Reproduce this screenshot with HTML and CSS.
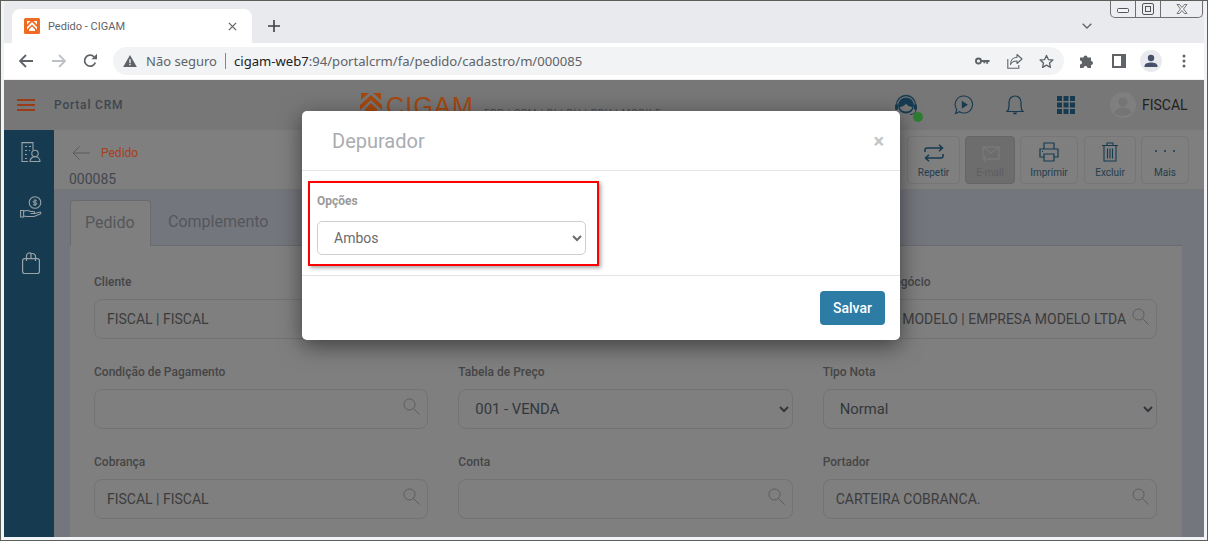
FILE: index.html
```html
<!DOCTYPE html>
<html lang="pt-BR">
<head>
<meta charset="utf-8">
<title>Pedido - CIGAM</title>
<link rel="stylesheet" href="styles.css">
</head>
<body>
<div class="window">
  <div class="tabstrip">
    <div class="tab">
      <svg class="favicon" viewBox="0 0 16 16"><rect width="16" height="16" rx="1.5" fill="#f26a21"/><path d="M3 3h3.500L3 6.500zM13 3H9.500L13 6.500zM8 4l5 5v2.500L8 6.500 3 11.500V9zM8 8.500l3 3V13H5v-1.500z" fill="#fff"/></svg>
      <span class="tab-title">Pedido - CIGAM</span>
      <svg class="tab-close" viewBox="0 0 10 10"><path d="M1 1l8 8M9 1l-8 8" stroke="#5f6368" stroke-width="1.4"/></svg>
    </div>
    <svg class="new-tab" viewBox="0 0 12 12"><path d="M6 0v12M0 6h12" stroke="#3c4043" stroke-width="1.6"/></svg>
    <svg class="tab-search" viewBox="0 0 10 6"><path d="M.7.7L5 5 9.300.7" fill="none" stroke="#5f6368" stroke-width="1.300"/></svg>
    <div class="win-controls">
      <span class="win-btn win-min"><svg viewBox="0 0 12 5" width="12" height="5"><rect x=".5" y=".5" width="11" height="4" rx="1" fill="#f4f5f7" stroke="#555"/></svg></span>
      <span class="win-btn win-max"><svg viewBox="0 0 12 12" width="12" height="12"><rect x=".5" y=".5" width="11" height="11" rx="1.500" fill="none" stroke="#555"/><rect x="3.500" y="3.500" width="5" height="5" fill="none" stroke="#555"/></svg></span>
      <span class="win-btn win-close"><svg viewBox="0 0 12 10" width="12" height="10"><path d="M1 .5h2.500L6 3.500 8.500.5H11L7.500 5 11 9.500H8.500L6 6.500 3.500 9.500H1L4.500 5z" fill="#f4f5f7" stroke="#555" stroke-width=".8"/></svg></span>
    </div>
  </div>

  <div class="toolbar">
    <svg class="tb-ico" viewBox="0 0 16 16"><path d="M15 8H2M8 2L2 8l6 6" fill="none" stroke="#5f6368" stroke-width="1.800"/></svg>
    <svg class="tb-ico" viewBox="0 0 16 16"><path d="M1 8h13M8 2l6 6-6 6" fill="none" stroke="#bdc1c6" stroke-width="1.800"/></svg>
    <svg class="tb-ico" viewBox="0 0 16 16"><path d="M13.300 9.500A5.500 5.500 0 1 1 12 3.800" fill="none" stroke="#5f6368" stroke-width="1.800"/><path d="M9.500 6.300H15V.8z" fill="#5f6368"/></svg>
    <div class="omnibox">
      <svg class="warn" viewBox="0 0 16 14"><path d="M8 0l8 14H0z" fill="#5f6368"/><path d="M7.200 5h1.600v4.500H7.200zM7.200 10.500h1.600V12H7.200z" fill="#f1f3f4"/></svg>
      <span class="not-secure">Não seguro</span>
      <span class="omni-sep"></span>
      <span class="url"><b>cigam-web7</b>:94/portalcrm/fa/pedido/cadastro/m/000085</span>
      <svg class="omni-ico key" viewBox="0 0 16 8"><circle cx="3.700" cy="4" r="2.700" fill="none" stroke="#5f6368" stroke-width="2"/><path d="M6 3h9.500v2H14v2h-2V5h-1v1.500H9V5H6z" fill="#5f6368"/></svg>
      <svg class="omni-ico share" viewBox="0 0 16 16"><path d="M10 1.500l5 4.500-5 4.500V8C6.500 8 4.500 9 3.500 11.500 3.500 7.500 6 4.500 10 4.300z" fill="none" stroke="#5f6368" stroke-width="1.100" stroke-linejoin="round"/><path d="M.8 6v9.200h11V12" fill="none" stroke="#5f6368" stroke-width="1.100"/></svg>
      <svg class="omni-ico star" viewBox="0 0 16 16"><path d="M8 1.500l2 4.400 4.800.5-3.600 3.200 1 4.700L8 11.900l-4.200 2.400 1-4.700L1.200 6.400 6 5.900z" fill="none" stroke="#5f6368" stroke-width="1.400" stroke-linejoin="round"/></svg>
    </div>
    <svg class="tb-ico puzzle" viewBox="0 0 16 16"><path d="M1 4.500h3.500a2 2 0 1 1 4 0H12V8a2 2 0 1 1 0 4v3H8.500a2 2 0 1 0-4 0H1v-3.500a2 2 0 1 0 0-4z" fill="#5f6368"/></svg>
    <svg class="tb-ico panel" viewBox="0 0 14 14"><path d="M0 0h14v14H0z" fill="#5f6368"/><path d="M2 2h7v10H2z" fill="#fff"/></svg>
    <svg class="profile" viewBox="0 0 22 22"><circle cx="11" cy="11" r="11" fill="#e8eaed"/><circle cx="11" cy="8" r="3.200" fill="#46506b"/><path d="M4.500 16c0-2.500 3.500-3.500 6.500-3.500s6.500 1 6.500 3.500v1h-13z" fill="#46506b"/></svg>
    <svg class="tb-ico dots" viewBox="0 0 4 14"><circle cx="2" cy="2" r="1.500" fill="#5f6368"/><circle cx="2" cy="7" r="1.500" fill="#5f6368"/><circle cx="2" cy="12" r="1.500" fill="#5f6368"/></svg>
  </div>

  <div class="page">
    <header class="app-header">
      <div class="hamburger"><i></i><i></i><i></i></div>
      <span class="app-name">Portal CRM</span>
      <div class="logo">
        <svg class="logo-mark" viewBox="0 0 22 20"><path d="M1 0h8L1 7zM21 0h-8l8 7zM11 2l11 10v5L11 7 0 17v-5zM11 10l6 6v4H5v-4z" fill="#a5480f"/></svg>
        <span class="logo-name">CIGAM</span>
        <span class="logo-sub">ERP | CRM | BI | RH | PDV | MOBILE</span>
      </div>
      <div class="header-icons">
        <span class="agent">
          <svg viewBox="0 0 24 26" width="24" height="26"><path d="M2.500 13a9.500 9.500 0 0 1 19 0" fill="none" stroke="#163b50" stroke-width="1.300"/><circle cx="12" cy="13.500" r="8" fill="#163b50"/><path d="M5.500 15c3 0 5-1.500 6.500-3.500 1.500 2 3.500 3.500 6.500 3.500-1 3-3.500 4.500-6.500 4.500S6.500 18 5.500 15z" fill="#777"/><rect x="1" y="12" width="3" height="6" rx="1.500" fill="#163b50"/><rect x="20" y="12" width="3" height="6" rx="1.500" fill="#163b50"/><path d="M22 18c0 3-3 4.500-6 4.500" fill="none" stroke="#163b50"/></svg>
          <i class="status-dot"></i>
        </span>
        <svg class="play" viewBox="0 0 20 20" width="20" height="20"><path d="M10 1a8.500 8.500 0 1 1-4.500 15.700L1.500 18.500l1.300-4A8.500 8.500 0 0 1 10 1z" fill="none" stroke="#163b50" stroke-width="1.100"/><path d="M7.800 5.800l6 4-6 4z" fill="#163b50"/></svg>
        <svg class="bell" viewBox="0 0 18 22" width="18" height="22"><path d="M1 17.500h16c-2-1.500-2-3-2-5.500V8A6 6 0 0 0 3 8v4c0 2.500 0 4-2 5.500z" fill="none" stroke="#163b50" stroke-width="1.200"/><path d="M7 18.500a2 2 0 0 0 4 0z" fill="#163b50"/></svg>
        <svg class="grid-ico" viewBox="0 0 18 18" width="18" height="18"><path d="M0 0h5v5H0zM6.500 0h5v5h-5zM13 0h5v5h-5zM0 6.500h5v5H0zM6.500 6.500h5v5h-5zM13 6.500h5v5h-5zM0 13h5v5H0zM6.500 13h5v5h-5zM13 13h5v5h-5z" fill="#163b50"/></svg>
        <svg class="avatar" viewBox="0 0 26 26" width="26" height="26"><circle cx="13" cy="13" r="13" fill="#7f7f7f"/><circle cx="13" cy="10" r="4.500" fill="#757575"/><path d="M4.500 21c1-4 5-5.500 8.500-5.500s7.500 1.500 8.500 5.500a13 13 0 0 1-17 0z" fill="#757575"/></svg>
        <span class="user-name">FISCAL</span>
      </div>
    </header>

    <div class="app-body">
      <nav class="sidebar">
        <svg viewBox="0 0 20 20" width="20" height="20"><path d="M7 19.500H1V.6h11V8M4 4.500h2M8 4.500h2M4 8.500h2M8 8.500h1M4 12.500h2M4 16.500h2" fill="none" stroke="#98a2a8" stroke-width="1.100"/><circle cx="14" cy="11.500" r="3.200" fill="none" stroke="#98a2a8" stroke-width="1.100"/><path d="M9 19.500c0-3 2.500-4.800 5-4.800s5 1.800 5 4.800z" fill="none" stroke="#98a2a8" stroke-width="1.100"/></svg>
        <svg viewBox="0 0 22 22" width="22" height="22"><circle cx="15" cy="6.500" r="5.800" fill="none" stroke="#98a2a8" stroke-width="1.100"/><path d="M15 3v7M17 4.800h-2.800a1 1 0 0 0 0 2h1.600a1 1 0 0 1 0 2H13" fill="none" stroke="#98a2a8" stroke-width="1"/><path d="M.6 14.500h3v6.500h-3zM3.600 15.500c3-2 5-1 7 0h3c1.300 0 1.300 2 0 2h-3 4.400l4.500-1.300c1.400-.3 1.800 1 .7 1.700L14 20.500H7l-3.400-.5" fill="none" stroke="#98a2a8" stroke-width="1.100"/></svg>
        <svg class="bag" viewBox="0 0 18 22" width="18" height="22"><rect x=".6" y="6.600" width="16.800" height="15" rx="2" fill="none" stroke="#98a2a8" stroke-width="1.200"/><path d="M4.500 9V4a3 3 0 0 1 5-2.300A3 3 0 0 1 13.500 4v5M9 2v4" fill="none" stroke="#98a2a8" stroke-width="1.200"/></svg>
      </nav>

      <main class="main">
        <div class="action-bar">
          <div class="crumbs">
            <div class="crumb-top">
              <svg viewBox="0 0 18 14" width="18" height="14"><path d="M18 7H1M7.500 .5L1 7l6.500 6.500" fill="none" stroke="#5c5c5c" stroke-width="1"/></svg>
              <span class="crumb-link">Pedido</span>
            </div>
            <div class="crumb-code">000085</div>
          </div>
          <div class="actions">
            <div class="action a-repeat">
              <svg viewBox="0 0 20 18" width="20" height="18"><path d="M1 8V6a2 2 0 0 1 2-2h15M15 .8L18.500 4 15 7.200M19 10v2a2 2 0 0 1-2 2H2M5 10.800L1.500 14 5 17.200" fill="none" stroke="#163b50" stroke-width="1.500"/></svg>
              <span>Repetir</span>
            </div>
            <div class="action a-mail is-disabled">
              <svg viewBox="0 0 20 16" width="20" height="16"><path d="M3 9V1h16v12H7M3 1l8 6 8-6M2 11h4M3 13h3M4 15h2" fill="none" stroke="#7e7e7e" stroke-width="1"/></svg>
              <span>E-mail</span>
            </div>
            <div class="action a-print">
              <svg viewBox="0 0 20 20" width="20" height="20"><path d="M5 7V1h10v6M5 15H1V7h18v8h-4M5 12h10v7H5zM3 9.500h1" fill="none" stroke="#163b50" stroke-width="1.200"/></svg>
              <span>Imprimir</span>
            </div>
            <div class="action a-trash">
              <svg viewBox="0 0 16 20" width="16" height="20"><path d="M0 3.500h16M5 3.500V1h6v2.500M2 3.500V19h12V3.500M5.500 6.500v10M8 6.500v10M10.500 6.500v10" fill="none" stroke="#163b50" stroke-width="1.100"/></svg>
              <span>Excluir</span>
            </div>
            <div class="action a-more">
              <svg viewBox="0 0 22 4" width="22" height="4"><circle cx="2" cy="2" r="1" fill="#163b50"/><circle cx="11" cy="2" r="1" fill="#163b50"/><circle cx="20" cy="2" r="1" fill="#163b50"/></svg>
              <span>Mais</span>
            </div>
          </div>
        </div>

        <div class="content">
          <div class="tabs">
            <span class="page-tab is-active">Pedido</span>
            <span class="page-tab">Complemento</span>
          </div>
          <div class="card">
            <div class="form-grid">
              <div class="field"><label>Cliente</label><div class="search-input"><input value="FISCAL | FISCAL"><svg class="lens" viewBox="0 0 17 17"><circle cx="6.500" cy="6.500" r="5.500" fill="none" stroke="#5c5c5c"/><path d="M10.500 10.500L16.500 16.500" stroke="#5c5c5c"/></svg></div></div>
              <div class="field"><label>Vendedor</label><div class="search-input"><input value=""></div></div>
              <div class="field"><label>Unidade de Negócio</label><div class="search-input"><input class="txt-tight" value="EMPRESA MODELO | EMPRESA MODELO LTDA"><svg class="lens" viewBox="0 0 17 17"><circle cx="6.500" cy="6.500" r="5.500" fill="none" stroke="#5c5c5c"/><path d="M10.500 10.500L16.500 16.500" stroke="#5c5c5c"/></svg></div></div>

              <div class="field"><label>Condição de Pagamento</label><div class="search-input"><input value=""><svg class="lens" viewBox="0 0 17 17"><circle cx="6.500" cy="6.500" r="5.500" fill="none" stroke="#5c5c5c"/><path d="M10.500 10.500L16.500 16.500" stroke="#5c5c5c"/></svg></div></div>
              <div class="field"><label>Tabela de Preço</label><select class="dim-select"><option>001 - VENDA</option></select></div>
              <div class="field"><label>Tipo Nota</label><select class="dim-select"><option>Normal</option></select></div>

              <div class="field"><label>Cobrança</label><div class="search-input"><input value="FISCAL | FISCAL"><svg class="lens" viewBox="0 0 17 17"><circle cx="6.500" cy="6.500" r="5.500" fill="none" stroke="#5c5c5c"/><path d="M10.500 10.500L16.500 16.500" stroke="#5c5c5c"/></svg></div></div>
              <div class="field"><label>Conta</label><div class="search-input"><input value=""><svg class="lens" viewBox="0 0 17 17"><circle cx="6.500" cy="6.500" r="5.500" fill="none" stroke="#5c5c5c"/><path d="M10.500 10.500L16.500 16.500" stroke="#5c5c5c"/></svg></div></div>
              <div class="field"><label>Portador</label><div class="search-input"><input value="CARTEIRA COBRANCA."><svg class="lens" viewBox="0 0 17 17"><circle cx="6.500" cy="6.500" r="5.500" fill="none" stroke="#5c5c5c"/><path d="M10.500 10.500L16.500 16.500" stroke="#5c5c5c"/></svg></div></div>
            </div>
          </div>
        </div>
      </main>
    </div>

    <section class="modal">
      <div class="modal-head">
        <h2>Depurador</h2>
        <span class="modal-close">×</span>
      </div>
      <div class="modal-body">
        <label>Opções</label>
        <select class="modal-select"><option>Ambos</option></select>
      </div>
      <div class="modal-foot">
        <button class="btn-save" type="button">Salvar</button>
      </div>
      <div class="annotation"></div>
    </section>
  </div>
</div>
</body>
</html>
```

FILE: styles.css
```css
* { box-sizing: border-box; }
html, body { margin: 0; padding: 0; width: 1208px; height: 541px; overflow: hidden; }
body { font-family: Roboto, "Liberation Sans", sans-serif; }

.window {
  width: 1208px; height: 541px;
  background: #f1f3f6;
  border: 1px solid #5a5f5a;
  padding: 0 3px 3px 3px;
  display: flex; flex-direction: column;
  position: relative;
}

/* tab strip */
.tabstrip { height: 42px; background: #e8eaed; display: flex; align-items: flex-end; position: relative; flex: none; padding-left: 8px; }
.tab { width: 240px; height: 34px; background: #fff; border-radius: 8px 8px 0 0; display: flex; align-items: center; padding: 0 11px 0 12px; }
.favicon { width: 16px; height: 16px; flex: none; }
.tab-title { font-family: Roboto, sans-serif; font-size: 11px; color: #5f6368; margin-left: 8px; flex: 1; }
.tab-close { width: 9px; height: 9px; flex: none; margin-right: 4px; }
.new-tab { width: 12px; height: 12px; margin: 0 0 11px 16px; }
.tab-search { width: 10px; height: 6px; position: absolute; right: 112px; bottom: 14px; }
.win-controls { position: absolute; right: 1px; top: 0; width: 93px; height: 17px; display: flex; background: #eceef1; border: 1px solid #6f6f6f; border-top: 0; border-radius: 0 0 5px 5px; }
.win-btn { display: flex; align-items: center; justify-content: center; border-right: 1px solid #6f6f6f; }
.win-min { width: 25px; padding-top: 3px; }
.win-max { width: 25px; }
.win-close { flex: 1; border-right: 0; }

/* browser toolbar */
.toolbar { height: 37px; background: #fff; display: flex; align-items: center; flex: none; padding-left: 14px; border-bottom: 1px solid #f0f0f0; }
.tb-ico { width: 16px; height: 16px; flex: none; margin-right: 17px; }
.tb-ico:nth-child(2) { margin-right: 15px; }
.tb-ico:nth-child(3) { margin-right: 15px; }
.omnibox { width: 951px; height: 28px; border-radius: 14px; background: #f1f3f4; display: flex; align-items: center; padding-left: 10px; font-family: "Noto Sans", sans-serif; flex: none; margin-right: 15px; }
.warn { width: 14px; height: 12px; flex: none; }
.not-secure { font-size: 13px; color: #5f6368; margin-left: 9px; }
.omni-sep { width: 1px; height: 16px; background: #80868b; margin: 0 8px 0 8px; }
.url { font-size: 13.100px; color: #5f6368; flex: 1; }
.url b { font-weight: 400; color: #202124; }
.omni-ico { flex: none; }
.key { width: 15px; height: 8px; margin-right: 17px; }
.share { width: 16px; height: 16px; margin-right: 16px; }
.star { width: 15px; height: 15px; margin-right: 10px; }
.puzzle { width: 16px; height: 16px; margin-right: 17px; }
.panel { width: 14px; height: 14px; margin-right: 14px; }
.profile { width: 22px; height: 22px; flex: none; margin-right: 20px; }
.dots { width: 4px; height: 14px; margin-right: 0; }

/* dimmed application */
.page { flex: 1; position: relative; display: flex; flex-direction: column; min-height: 0; overflow: hidden; background: #74767d; }
.app-header { height: 50px; flex: none; background: #777; display: flex; align-items: center; position: relative; padding-left: 13px; }
.hamburger { width: 18px; display: flex; flex-direction: column; gap: 3px; }
.hamburger i { display: block; height: 2px; background: #9b3c18; }
.app-name { font-size: 12px; font-weight: 500; letter-spacing: .8px; color: #3f4650; margin-left: 19px; }
.logo { position: absolute; left: 356px; top: 13px; display: flex; align-items: flex-start; }
.logo-mark { width: 22px; height: 20px; flex: none; }
.logo-name { font-size: 25px; line-height: 27px; color: #a5480f; letter-spacing: 1.200px; margin-left: 4px; font-family: "Liberation Sans", sans-serif; }
.logo-sub { font-size: 10px; letter-spacing: .7px; color: #484c52; margin: 15px 0 0 10px; white-space: nowrap; }
.header-icons { position: absolute; left: 890px; top: 0; height: 50px; display: flex; align-items: center; }
.agent { display: block; position: relative; width: 24px; height: 26px; }
.status-dot { position: absolute; right: -5px; bottom: -4px; width: 10px; height: 10px; border-radius: 50%; background: #2e7d32; }
.play { margin-left: 36px; }
.bell { margin-left: 32px; }
.grid-ico { margin-left: 33px; }
.avatar { margin-left: 35px; }
.user-name { font-size: 14px; color: #1f1f1f; margin-left: 6px; }

.app-body { flex: 1; display: flex; min-height: 0; }
.sidebar { width: 50px; flex: none; background: #163b50; display: flex; flex-direction: column; align-items: center; padding: 12px 0 0 3px; gap: 34px; }
.main { flex: 1; min-width: 0; display: flex; flex-direction: column; }

.action-bar { height: 60px; flex: none; background: #7f7f7f; border-bottom: 1px solid #767676; display: flex; justify-content: space-between; }
.crumbs { padding: 16px 0 0 15px; }
.crumb-top { display: flex; align-items: center; padding-left: 3px; }
.crumb-link { font-size: 12px; color: #a8401a; margin-left: 11px; }
.crumb-code { font-size: 14px; line-height: 16px; color: #43474e; margin-top: 11px; }
.actions { display: flex; gap: 5px; padding: 6px 15px 0 0; }
.action { height: 48px; border: 1px solid #767676; border-radius: 4px; display: flex; flex-direction: column; align-items: center; justify-content: flex-end; padding-bottom: 5px; font-size: 10px; color: #1f3d4e; gap: 5px; }
.action svg { display: block; }
.a-repeat { width: 53px; }
.a-mail { width: 50px; background: #6d6d6d; color: #5d5d5d; border-color: #666; }
.a-print { width: 58px; }
.a-trash { width: 52px; margin-left: 1px; }
.a-more { width: 48px; }
.a-more svg { margin-bottom: 9px; }

.content { flex: 1; padding: 10px 22px 0 16px; min-height: 0; display: flex; flex-direction: column; }
.tabs { height: 46px; flex: none; display: flex; border-bottom: 1px solid #696b70; }
.page-tab { padding: 0 15px 2px 16px; display: flex; align-items: center; font-size: 16px; color: #55565a; height: 45px; border: 1px solid transparent; }
.page-tab.is-active { width: 81px; padding-left: 14px; padding-right: 0; background: #7f7f7f; border-color: #696b70; border-bottom-color: #7f7f7f; height: 46px; border-radius: 4px 4px 0 0; }
.card { flex: 1; background: #7f7f7f; padding: 29px 25px 0 24px; min-height: 0; overflow: hidden; }
.form-grid { display: grid; grid-template-columns: repeat(3, 1fr); column-gap: 30px; row-gap: 26px; }
.field { display: flex; flex-direction: column; }
.field label { font-size: 12px; line-height: 14px; font-weight: 500; color: #454545; margin-bottom: 10px; }
.search-input { position: relative; }
.search-input input, .dim-select {
  width: 100%; height: 40px; border: 1px solid #737373; border-radius: 8px; background: #7f7f7f;
  font-family: Roboto, sans-serif; font-size: 14px; color: #3c3c3c; padding: 0 12px; outline: none;
}
.search-input input.txt-tight { padding-right: 28px; }
.dim-select { padding-left: 12px; font-size: 14.800px; color: #33373c; }
.lens { position: absolute; right: 8px; top: 9px; width: 17px; height: 17px; }

/* modal */
.modal { position: absolute; left: 298px; top: 31px; width: 598px; height: 229px; background: #fff; border-radius: 5px; box-shadow: 0 6px 22px rgba(0,0,0,.5); display: flex; flex-direction: column; }
.modal-head { height: 60px; flex: none; border-bottom: 1px solid #e4e4e4; display: flex; align-items: center; justify-content: space-between; padding: 0 16px 0 30px; }
.modal-head h2 { margin: 0; font-size: 20px; font-weight: 400; color: #a9adb1; }
.modal-close { font-size: 20px; font-weight: 700; color: #c4c4c4; line-height: 1; }
.modal-body { height: 105px; flex: none; border-bottom: 1px solid #e4e4e4; padding: 23px 0 0 15px; display: flex; flex-direction: column; }
.modal-body label { font-size: 12px; line-height: 14px; font-weight: 700; color: #9a9a9a; margin-bottom: 13px; }
.modal-select { width: 269px; height: 34px; border: 1px solid #cfcfcf; border-radius: 5px; background: #fff; font-family: Roboto, sans-serif; font-size: 14px; color: #6b6b6b; padding-left: 12px; outline: none; }
.modal-foot { flex: 1; display: flex; justify-content: flex-end; padding: 15px 15px 0 0; }
.btn-save { width: 65px; height: 34px; border: 0; border-radius: 4px; background: #2d7ca6; color: #fff; font-family: Roboto, sans-serif; font-size: 14px; font-weight: 500; padding: 0; }
.annotation { position: absolute; left: 6px; top: 70px; width: 291px; height: 85px; border: 2px solid #f00; box-shadow: 2px 2px 4px rgba(0,0,0,.35); }
```
